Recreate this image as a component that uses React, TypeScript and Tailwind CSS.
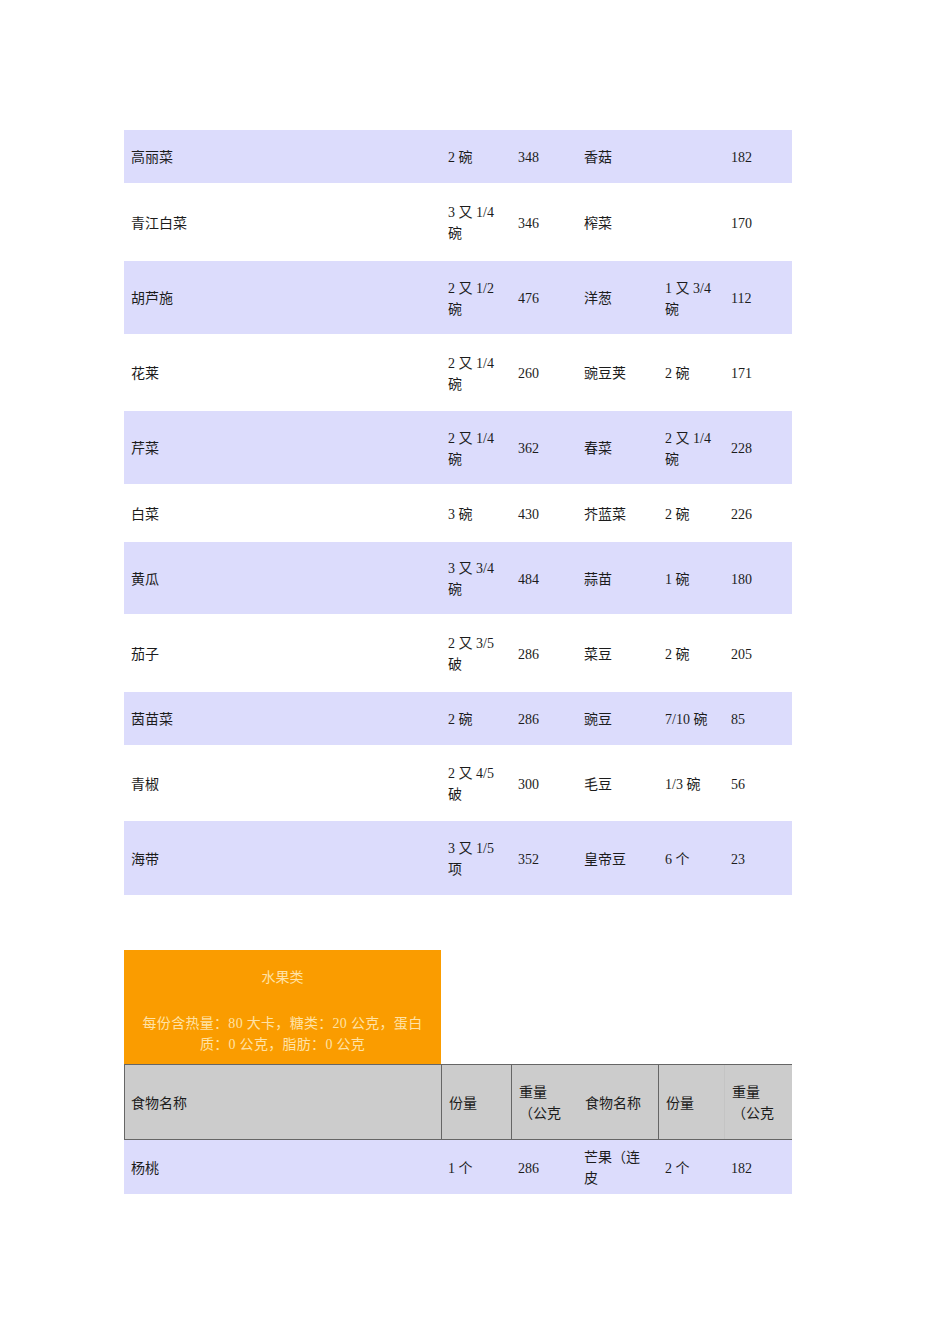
import React from "react";

interface Row {
  name: string;
  qty: string;
  weight: string;
  name2: string;
  qty2: string;
  weight2: string;
  h: string;
}

const veg: Row[] = [
  { name: "高丽菜", qty: "2 碗", weight: "348", name2: "香菇", qty2: "", weight2: "182", h: "h-[53px]" },
  { name: "青江白菜", qty: "3 又 1/4 碗", weight: "346", name2: "榨菜", qty2: "", weight2: "170", h: "h-[78px]" },
  { name: "胡芦施", qty: "2 又 1/2 碗", weight: "476", name2: "洋葱", qty2: "1 又 3/4 碗", weight2: "112", h: "h-[73px]" },
  { name: "花莱", qty: "2 又 1/4 碗", weight: "260", name2: "豌豆荚", qty2: "2 碗", weight2: "171", h: "h-[77px]" },
  { name: "芹菜", qty: "2 又 1/4 碗", weight: "362", name2: "春菜", qty2: "2 又 1/4 碗", weight2: "228", h: "h-[73px]" },
  { name: "白菜", qty: "3 碗", weight: "430", name2: "芥蓝菜", qty2: "2 碗", weight2: "226", h: "h-[58px]" },
  { name: "黄瓜", qty: "3 又 3/4 碗", weight: "484", name2: "蒜苗", qty2: "1 碗", weight2: "180", h: "h-[72px]" },
  { name: "茄子", qty: "2 又 3/5 破", weight: "286", name2: "菜豆", qty2: "2 碗", weight2: "205", h: "h-[78px]" },
  { name: "茵苗菜", qty: "2 碗", weight: "286", name2: "豌豆", qty2: "7/10 碗", weight2: "85", h: "h-[53px]" },
  { name: "青椒", qty: "2 又 4/5 破", weight: "300", name2: "毛豆", qty2: "1/3 碗", weight2: "56", h: "h-[76px]" },
  { name: "海带", qty: "3 又 1/5 项", weight: "352", name2: "皇帝豆", qty2: "6 个", weight2: "23", h: "h-[74px]" },
];

const cols = "grid grid-cols-[317px_70px_66px_81px_66px_68px]";
const cell = "flex items-center px-[7px] pt-[2px] leading-[21px]";

function DataRow({ r, shaded }: { r: Row; shaded: boolean }) {
  return (
    <div className={`${cols} ${r.h} ${shaded ? "bg-[#dcdcfc]" : "bg-white"}`}>
      <div className={cell}>{r.name}</div>
      <div className={cell}>{r.qty}</div>
      <div className={cell}>{r.weight}</div>
      <div className={cell}>{r.name2}</div>
      <div className={cell}>{r.qty2}</div>
      <div className={cell}>{r.weight2}</div>
    </div>
  );
}

export default function App() {
  return (
    <div
      className="min-h-[1344px] w-[950px] bg-white pl-[124px] pt-[130px] text-[14px] text-[#1c1c1c]"
      style={{ fontFamily: '"Liberation Serif", "Noto Sans CJK SC", serif' }}
    >
      {/* 蔬菜表 */}
      <div className="w-[668px]">
        {veg.map((r, i) => (
          <DataRow key={r.name} r={r} shaded={i % 2 === 0} />
        ))}
      </div>

      {/* 水果类 */}
      <div className="mt-[55px] w-[668px]">
        <div className="w-[317px] h-[114px] bg-[#fa9c00] text-[#ffe2a6] text-center leading-[21px] pt-[17px]">
          <div>水果类</div>
          <div className="h-[25px]" />
          <div className="tracking-[0.3px]">
            每份含热量：80 大卡，糖类：20 公克，蛋白
            <br />
            质：0 公克，脂肪：0 公克
          </div>
        </div>

        <div className={`${cols} h-[76px] bg-[#cccccc] border-y border-[#666666] border-l`}>
          <div className={`${cell} pl-[6px] border-r border-[#666666]`}>食物名称</div>
          <div className={`${cell} border-r border-[#666666]`}>份量</div>
          <div className={cell}>重量（公克</div>
          <div className={`${cell} border-r border-[#666666]`}>食物名称</div>
          <div className={`${cell} border-r border-[#c4c4c4]`}>份量</div>
          <div className={cell}>重量（公克</div>
        </div>

        <DataRow
          r={{ name: "杨桃", qty: "1 个", weight: "286", name2: "芒果（连皮", qty2: "2 个", weight2: "182", h: "h-[54px]" }}
          shaded
        />
      </div>
    </div>
  );
}
